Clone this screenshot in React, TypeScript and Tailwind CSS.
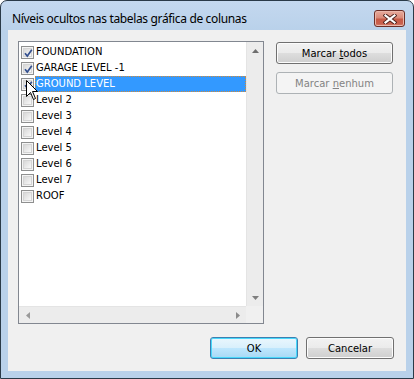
import React from "react";

const levels = [
  { label: "FOUNDATION", checked: true },
  { label: "GARAGE LEVEL -1", checked: true },
  { label: "GROUND LEVEL", checked: true, selected: true },
  { label: "Level 2", checked: false },
  { label: "Level 3", checked: false },
  { label: "Level 4", checked: false },
  { label: "Level 5", checked: false },
  { label: "Level 6", checked: false },
  { label: "Level 7", checked: false },
  { label: "ROOF", checked: false },
];

const uiFont = { fontFamily: '"DejaVu Sans", Verdana, sans-serif' };

function CheckBox({ checked }: { checked: boolean }) {
  return (
    <div className="w-[13px] h-[13px] shrink-0 border border-[#8e8f8f] bg-[#f4f4f4] p-px">
      <div className="relative w-full h-full border border-[#d4d4d4] bg-[linear-gradient(135deg,#d8d8d8,#f8f8f8)]">
        {checked && (
          <svg className="absolute -left-px -top-px" width="11" height="11" viewBox="0 0 11 11">
            <path d="M2 5.2 L4.3 8 L8.8 1.8" fill="none" stroke="#34508f" strokeWidth="1.7" />
          </svg>
        )}
      </div>
    </div>
  );
}

function WinButton({
  children,
  disabled,
  isDefault,
  className,
}: {
  children: React.ReactNode;
  disabled?: boolean;
  isDefault?: boolean;
  className?: string;
}) {
  let look =
    "border-[#707070] text-black bg-[linear-gradient(#f2f2f2_0%,#ebebeb_48%,#dddddd_52%,#cfcfcf_100%)] shadow-[inset_0_0_0_1px_#fcfcfc]";
  if (disabled) look = "border-[#adb2b5] text-[#838383] bg-[#f4f4f4]";
  if (isDefault)
    look =
      "border-[#3c7fb1] text-black bg-[linear-gradient(#eaf6fd_0%,#d9f0fc_48%,#bee6fd_52%,#a7d9f5_100%)] shadow-[inset_0_0_0_1px_#48d8fb]";
  return (
    <div
      className={`h-[22px] rounded-[3px] border flex items-center justify-center text-[10px] ${look} ${className ?? ""}`}
      style={uiFont}
    >
      {children}
    </div>
  );
}

function Arrow({ dir, color }: { dir: "up" | "down" | "left" | "right"; color: string }) {
  const pts = {
    up: "0,4 3.5,0 7,4",
    down: "0,0 3.5,4 7,0",
    left: "4,0 0,3.5 4,7",
    right: "0,0 4,3.5 0,7",
  }[dir];
  const vertical = dir === "up" || dir === "down";
  return (
    <svg width={vertical ? 7 : 4} height={vertical ? 4 : 7} viewBox={vertical ? "0 0 7 4" : "0 0 4 7"}>
      <polygon points={pts} fill={color} />
    </svg>
  );
}

function CloseButton() {
  return (
    <div className="w-[31px] h-[17px] rounded-[3px] border border-[#6b2e27] bg-[linear-gradient(#e8ab9d_0%,#d98a79_45%,#c75a46_55%,#c9614f_85%,#d98a78_100%)] flex items-center justify-center shadow-[inset_0_0_0_1px_#eab7ab]">
      <svg width="14" height="10" viewBox="0 0 14 10">
        <path d="M2.5 1.5 L11.5 8.5 M11.5 1.5 L2.5 8.5" stroke="#4a1f1a" strokeWidth="4" strokeLinecap="square" />
        <path d="M2.5 1.5 L11.5 8.5 M11.5 1.5 L2.5 8.5" stroke="#ffffff" strokeWidth="2.2" strokeLinecap="square" />
      </svg>
    </div>
  );
}

function Cursor() {
  return (
    <svg className="absolute left-[26px] top-[80px]" width="13" height="21" viewBox="0 0 13 21">
      <path
        d="M0.5 0.5 V16.5 L4.5 12.5 L7.5 19.5 L9.5 18.5 L6.5 11.5 H11.5 Z"
        fill="#ffffff"
        stroke="#000000"
        strokeWidth="1"
        strokeLinejoin="miter"
      />
    </svg>
  );
}

export default function App() {
  return (
    <div className="relative w-[414px] h-[379px] bg-white overflow-hidden">
      <div className="w-[414px] h-[379px] flex flex-col border border-[#2a3a48] rounded-t-[7px] bg-[linear-gradient(#c4d8ef,#b9d1ea_30px,#b9d1ea)]">
        {/* title bar */}
        <div className="h-[29px] flex items-start">
          <div
            className="flex-1 pl-[11px] pt-[10px] text-[12px] leading-[16px] text-black tracking-[-0.35px]"
            style={{ fontFamily: '"Noto Sans", "Open Sans", sans-serif' }}
          >
            Níveis ocultos nas tabelas gráfica de colunas
          </div>
          <div className="mt-[9px] mr-[8px]">
            <CloseButton />
          </div>
        </div>

        {/* client area */}
        <div className="mx-[7px] h-[341px] bg-[#f0f0f0] flex flex-col">
          <div className="flex">
            {/* list */}
            <div className="ml-[10px] mt-[11px] w-[246px] h-[283px] border border-[#828790] bg-white flex flex-col">
              <div className="flex flex-1 min-h-0">
                <div className="flex-1 pt-[2px]" style={uiFont}>
                  {levels.map((lv) => (
                    <div key={lv.label} className="h-[16px] flex items-center pl-[2px]">
                      <CheckBox checked={lv.checked} />
                      <div
                        className={`ml-px flex-1 h-[16px] pl-px text-[10px] leading-[16px] ${
                          lv.selected
                            ? "bg-[#3399ff] text-white outline outline-1 outline-dotted outline-[#d08a3a] -outline-offset-1"
                            : "text-black"
                        }`}
                      >
                        {lv.label}
                      </div>
                    </div>
                  ))}
                </div>
                <div className="w-[17px] bg-[#ececec] border-l border-[#e4e4e4] flex flex-col justify-between">
                  <div className="h-[17px] flex items-center justify-center">
                    <Arrow dir="up" color="#6e6e6e" />
                  </div>
                  <div className="h-[17px] flex items-center justify-center">
                    <Arrow dir="down" color="#7e7e7e" />
                  </div>
                </div>
              </div>
              <div className="h-[17px] flex">
                <div className="flex-1 bg-[#ececec] border-t border-[#e4e4e4] flex justify-between">
                  <div className="w-[17px] flex items-center justify-center">
                    <Arrow dir="left" color="#9a9a9a" />
                  </div>
                  <div className="w-[17px] flex items-center justify-center">
                    <Arrow dir="right" color="#8a8a8a" />
                  </div>
                </div>
                <div className="w-[17px] bg-[#f0f0f0]" />
              </div>
            </div>

            {/* side buttons */}
            <div className="ml-[12px] mt-[12px] flex flex-col gap-[8px]">
              <WinButton className="w-[117px]">
                <span>
                  Marcar <span className="underline underline-offset-[1px]">t</span>odos
                </span>
              </WinButton>
              <WinButton className="w-[117px]" disabled>
                <span>
                  Marcar <span className="underline underline-offset-[1px]">n</span>enhum
                </span>
              </WinButton>
            </div>
          </div>

          {/* bottom buttons */}
          <div className="mt-[13px] flex justify-end gap-[8px] pr-[12px]">
            <WinButton className="w-[88px]" isDefault>
              OK
            </WinButton>
            <WinButton className="w-[88px]">Cancelar</WinButton>
          </div>
        </div>
      </div>
      <Cursor />
    </div>
  );
}
